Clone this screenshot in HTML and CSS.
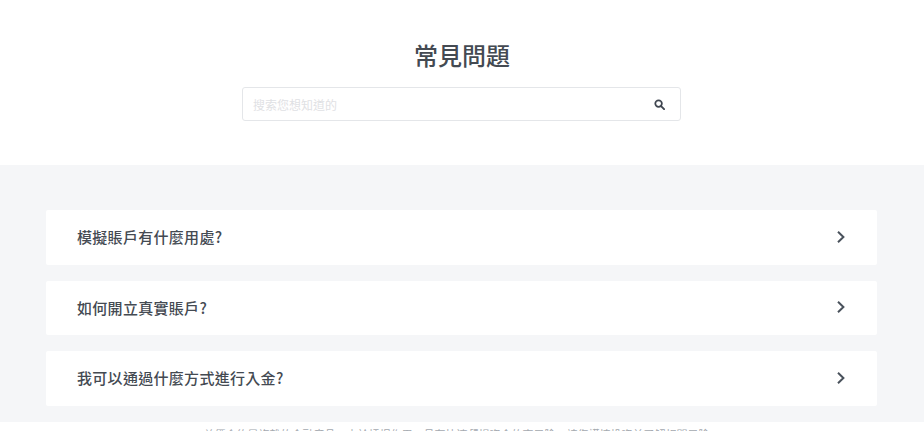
FILE: index.html
```html
<!DOCTYPE html>
<html lang="zh-Hant">
<head>
    <meta charset="UTF-8">
    <meta name="viewport" content="width=device-width, initial-scale=1.0">
    <title>常見問題</title>
    <link rel="stylesheet" href="styles.css">
</head>
<body>
    <header class="faq-head">
        <h1>常見問題</h1>
        <form class="search-box">
            <input type="text" placeholder="搜索您想知道的">
            <svg class="search-icon" viewBox="0 0 12 12" width="11" height="11">
                <circle cx="5" cy="5" r="3.6" fill="none" stroke="#3f4650" stroke-width="1.9"/>
                <path d="M7.7 7.7L11 11" fill="none" stroke="#3f4650" stroke-width="2.1" stroke-linecap="round"/>
            </svg>
        </form>
    </header>

    <section class="faq-list">
        <div class="faq-item">
            <span>模擬賬戶有什麼用處?</span>
            <svg class="chevron" viewBox="0 0 10 14" width="10" height="14"><path d="M2 1.8L7.4 7L2 12.2" fill="none" stroke="#4a525c" stroke-width="2"/></svg>
        </div>
        <div class="faq-item">
            <span>如何開立真實賬戶?</span>
            <svg class="chevron" viewBox="0 0 10 14" width="10" height="14"><path d="M2 1.8L7.4 7L2 12.2" fill="none" stroke="#4a525c" stroke-width="2"/></svg>
        </div>
        <div class="faq-item">
            <span>我可以通過什麼方式進行入金?</span>
            <svg class="chevron" viewBox="0 0 10 14" width="10" height="14"><path d="M2 1.8L7.4 7L2 12.2" fill="none" stroke="#4a525c" stroke-width="2"/></svg>
        </div>
    </section>

    <footer class="footer">
        <p>差價合約是複雜的金融產品，由於槓桿作用，具有快速虧損資金的高風險，請您謹慎投資並了解相關風險。</p>
    </footer>
</body>
</html>
```

FILE: styles.css
```css
* {
    margin: 0;
    padding: 0;
    box-sizing: border-box;
}

html, body {
    height: 100%;
    overflow: hidden;
}

body {
    background: #fff;
    color: #444a52;
    font-family: "Noto Sans CJK TC", "Noto Sans", sans-serif;
}

/* Title and search */
.faq-head {
    height: 165px;
    padding-top: 37px;
    display: flex;
    flex-direction: column;
    align-items: center;
}

.faq-head h1 {
    font-size: 24px;
    line-height: 35px;
    font-weight: 500;
    margin-bottom: 15px;
}

.search-box {
    width: 439px;
    height: 34px;
    margin-left: -1px;
    display: flex;
    align-items: center;
    padding: 0 15px 0 10px;
    border: 1px solid #e4e6e9;
    border-radius: 3px;
}

.search-box input {
    flex: 1;
    border: 0;
    outline: 0;
    font-family: inherit;
    font-size: 12px;
}

.search-box input::placeholder {
    color: #dfe1e4;
}

/* Question list */
.faq-list {
    height: 257px;
    background: #f5f6f8;
    padding: 45px 47px 0 46px;
    display: flex;
    flex-direction: column;
    gap: 16px;
}

.faq-item {
    height: 54.5px;
    flex: none;
    display: flex;
    align-items: center;
    justify-content: space-between;
    padding: 0 31px 1px 31px;
    background: #fff;
    border-radius: 2px;
    font-size: 15px;
    font-weight: 500;
    letter-spacing: 0.3px;
}

.footer {
    padding-top: 3px;
    text-align: center;
    font-size: 11px;
    line-height: 18px;
    color: #a4a9af;
    white-space: nowrap;
}
```
